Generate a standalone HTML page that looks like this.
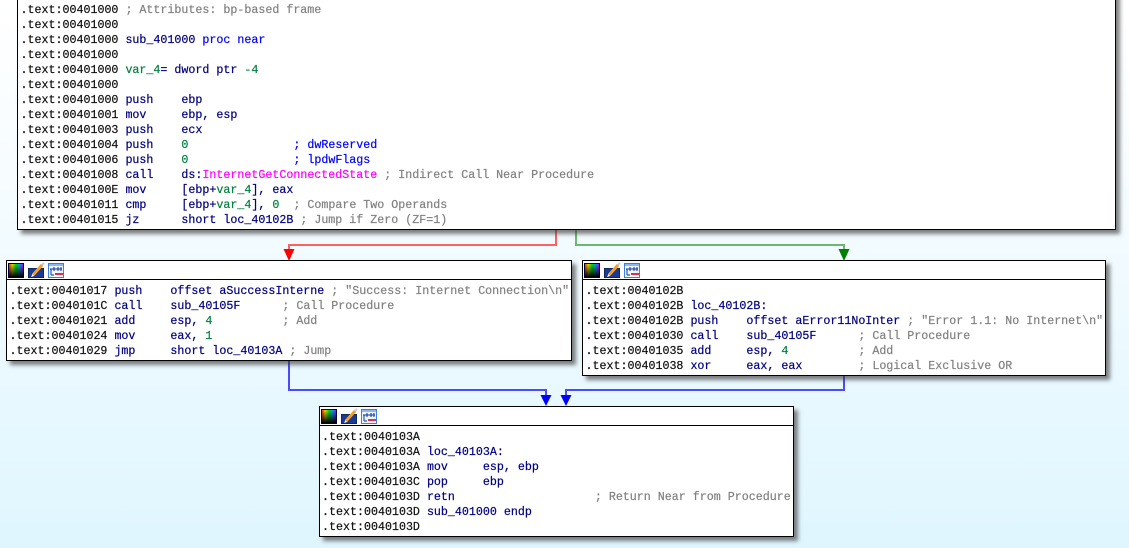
<!DOCTYPE html>
<html><head><meta charset="utf-8"><style>
html,body{margin:0;padding:0}
body{width:1129px;height:548px;overflow:hidden;position:relative;background:linear-gradient(#ffffff 0,#f6fcff 180px,#dff6ff 548px)}
.b{position:absolute;box-sizing:border-box;background:#fff;border:1px solid #000;box-shadow:4px 4px 4px rgba(60,60,60,.65)}
pre{position:absolute;margin:0;font:11.67px/15px "Liberation Mono",monospace;color:#101010;white-space:pre;-webkit-text-stroke:.2px currentColor}
.m{color:#000080}.c{color:#808080}.n{color:#008040}.v{color:#008040}.l{color:#0000ff}.i{color:#ff00ff}
.sep{position:absolute;left:0;right:0;height:1px;background:#000;top:18px}
svg.ic{position:absolute;left:1px;top:1px}
svg.a{position:absolute;left:0;top:0}
</style></head><body>
<svg class="a" width="1129" height="548">
<path d="M556 230V245H289V250" fill="none" stroke="#ff6060" stroke-width="2"/>
<path d="M283.500 249H294.500L289 261Z" fill="#ff0000"/>
<path d="M576 230V245H844V250" fill="none" stroke="#6cb86c" stroke-width="2"/>
<path d="M838.500 249H849.500L844 261Z" fill="#008000"/>
<path d="M289 361V390H546V395" fill="none" stroke="#4a4aff" stroke-width="2"/>
<path d="M540.500 395H551.500L546 406Z" fill="#0000ff"/>
<path d="M844 376V390H566V395" fill="none" stroke="#4a4aff" stroke-width="2"/>
<path d="M560.500 395H571.500L566 406Z" fill="#0000ff"/>
</svg>
<svg width="0" height="0" style="position:absolute"><defs>
<linearGradient id="g1" x1="0" y1="0" x2="1" y2="0"><stop offset="0" stop-color="#ff2000"/><stop offset=".25" stop-color="#e0e000"/><stop offset=".5" stop-color="#00e000"/><stop offset=".75" stop-color="#00a0ff"/><stop offset="1" stop-color="#c000ff"/></linearGradient>
<linearGradient id="g2" x1="0" y1="0" x2="0" y2="1"><stop offset="0" stop-color="#000" stop-opacity="0"/><stop offset="1" stop-color="#000"/></linearGradient>
<g id="icons">
<rect x=".5" y="1.500" width="15" height="14" fill="url(#g1)" stroke="#000040"/>
<rect x="1" y="2" width="14" height="13" fill="url(#g2)"/>
<rect x="20.500" y="6.500" width="15" height="9" fill="#1a3a9a" stroke="#0c2a5a"/>
<path d="M25 13L34 3" stroke="#f5a020" stroke-width="3"/>
<path d="M34 3L36 1" stroke="#c8c8e0" stroke-width="2"/>
<path d="M23 15L24.500 12L26 14Z" fill="#fff"/>
<rect x="40.500" y="1.500" width="15" height="14" fill="#eef6ff" stroke="#3a80e0"/>
<rect x="41" y="2" width="14" height="2" fill="#8ab8f0"/>
<path d="M42 7H54M43 7V13M46 5V9M50 5V9M53 5V9M43 13H46" stroke="#1030a0" fill="none"/>
<rect x="47" y="11" width="8" height="2" fill="#e03050"/>
</g></defs></svg>

<div class="b" style="left:17px;top:-10px;width:1099px;height:240px"></div>
<pre style="left:20.500px;top:3px">.text:00401000 <span class="c">; Attributes: bp-based frame</span>
.text:00401000
.text:00401000 <span class="m">sub_401000</span> <span class="l">proc near</span>
.text:00401000
.text:00401000 <span class="v">var_4</span><span class="m">= dword ptr</span> <span class="n">-4</span>
.text:00401000
.text:00401000 <span class="m">push    ebp</span>
.text:00401001 <span class="m">mov     ebp, esp</span>
.text:00401003 <span class="m">push    ecx</span>
.text:00401004 <span class="m">push    </span><span class="n">0</span>               <span class="l">; dwReserved</span>
.text:00401006 <span class="m">push    </span><span class="n">0</span>               <span class="l">; lpdwFlags</span>
.text:00401008 <span class="m">call    ds:</span><span class="i">InternetGetConnectedState</span> <span class="c">; Indirect Call Near Procedure</span>
.text:0040100E <span class="m">mov     [ebp+</span><span class="v">var_4</span><span class="m">], eax</span>
.text:00401011 <span class="m">cmp     [ebp+</span><span class="v">var_4</span><span class="m">], </span><span class="n">0</span>  <span class="c">; Compare Two Operands</span>
.text:00401015 <span class="m">jz      short loc_40102B</span> <span class="c">; Jump if Zero (ZF=1)</span></pre>

<div class="b" style="left:6px;top:260px;width:566px;height:101px"><div class="sep"></div><svg class="ic" width="60" height="18"><use href="#icons"/></svg></div>
<pre style="left:9.500px;top:284px">.text:00401017 <span class="m">push    offset aSuccessInterne</span> <span class="c">; "Success: Internet Connection\n"</span>
.text:0040101C <span class="m">call    sub_40105F</span>      <span class="c">; Call Procedure</span>
.text:00401021 <span class="m">add     esp, </span><span class="n">4</span>          <span class="c">; Add</span>
.text:00401024 <span class="m">mov     eax, </span><span class="n">1</span>
.text:00401029 <span class="m">jmp     short loc_40103A</span> <span class="c">; Jump</span></pre>

<div class="b" style="left:582px;top:260px;width:524px;height:116px"><div class="sep"></div><svg class="ic" width="60" height="18"><use href="#icons"/></svg></div>
<pre style="left:585.500px;top:284px">.text:0040102B
.text:0040102B <span class="m">loc_40102B:</span>
.text:0040102B <span class="m">push    offset aError11NoInter</span> <span class="c">; "Error 1.1: No Internet\n"</span>
.text:00401030 <span class="m">call    sub_40105F</span>      <span class="c">; Call Procedure</span>
.text:00401035 <span class="m">add     esp, </span><span class="n">4</span>          <span class="c">; Add</span>
.text:00401038 <span class="m">xor     eax, eax</span>        <span class="c">; Logical Exclusive OR</span></pre>

<div class="b" style="left:319px;top:406px;width:475px;height:131px"><div class="sep"></div><svg class="ic" width="60" height="18"><use href="#icons"/></svg></div>
<pre style="left:322px;top:430px">.text:0040103A
.text:0040103A <span class="m">loc_40103A:</span>
.text:0040103A <span class="m">mov     esp, ebp</span>
.text:0040103C <span class="m">pop     ebp</span>
.text:0040103D <span class="m">retn</span>                    <span class="c">; Return Near from Procedure</span>
.text:0040103D <span class="m">sub_401000 endp</span>
.text:0040103D</pre>
</body></html>
